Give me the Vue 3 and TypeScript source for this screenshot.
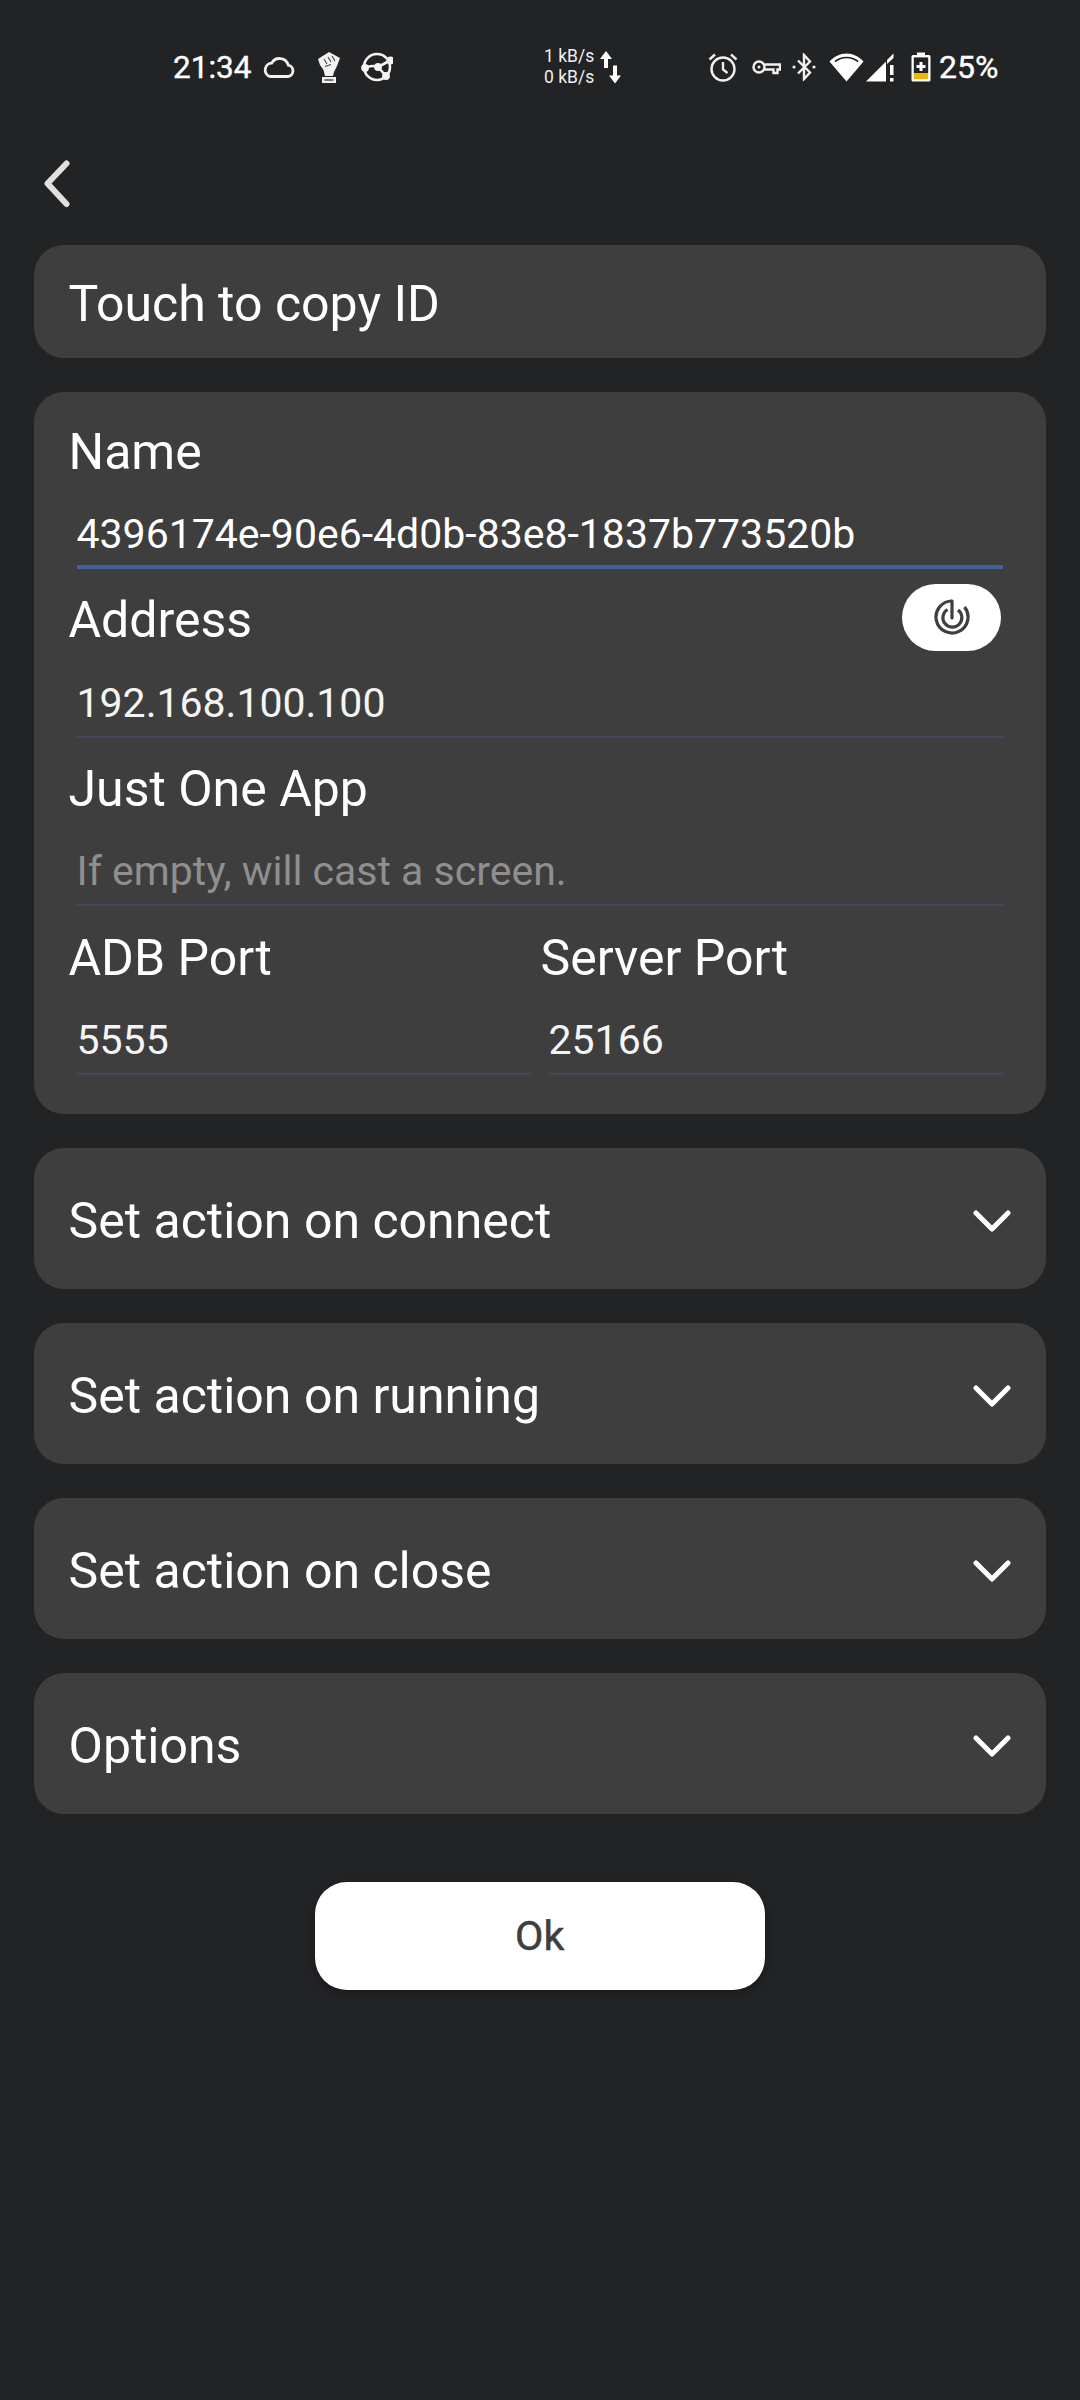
<script setup lang="ts">
const sections: string[] = ['Set action on connect', 'Set action on running', 'Set action on close', 'Options']
</script>

<template>
  <div class="page">
    <div class="status">
      <span class="time">21:34</span>
      <svg class="i-cloud" width="33" height="22" viewBox="0 0 33 22" fill="none" stroke="#f0f0f0" stroke-width="2.800"><path d="M8 20.500H25.500a5.700 5.700 0 0 0 .8-11.300A9 9 0 0 0 9.700 7.200 6.800 6.800 0 0 0 8 20.500Z"/></svg>
      <svg class="i-fist" width="24" height="32" viewBox="0 0 24 32"><path d="M1 8 12 1l11 6-3 8-3 6-1 4H8L6.500 19 3 14Z" fill="#f2f2f2"/><path d="M7 8l3 5M11 6l3 5M15 5l3 5M8 15.500l6-2" stroke="#4a4a4a" stroke-width="1.200" fill="none"/><rect x="5" y="26" width="14" height="6" fill="#f2f2f2"/><rect x="7.500" y="28" width="9" height="2" fill="#777"/></svg>
      <svg class="i-net" width="32" height="30" viewBox="0 0 32 30" fill="none" stroke="#f4f4f4" stroke-width="2.600"><circle cx="16" cy="15" r="13"/><path d="M4 16C8 14 13 13.500 17 15L30 8M17 15 25 24"/><circle cx="4" cy="16" r="2.600" fill="#f4f4f4"/><circle cx="17" cy="15" r="2.600" fill="#f4f4f4"/><circle cx="29.500" cy="8.500" r="2.600" fill="#f4f4f4"/><circle cx="25" cy="24" r="2.600" fill="#f4f4f4"/></svg>
      <div class="speed"><span>1 kB/s</span><span>0 kB/s</span></div>
      <svg class="i-arrows" width="24" height="33" viewBox="0 0 24 33" fill="#fff"><path d="M6 0 12 8H8V17H4V8H0ZM13 14.500H17V24.500H21L15 32.500 9 24.500H13Z"/></svg>
      <svg class="i-alarm" width="30" height="30" viewBox="0 0 30 30" fill="none" stroke="#f0f0f0" stroke-width="2.400"><circle cx="15" cy="17" r="11.500"/><path d="M15 10v7.500l4.500 3.500M1.500 7.500 7 2.500M28.500 7.500 23 2.500"/></svg>
      <svg class="i-key" width="29" height="17" viewBox="0 0 29 17" fill="none" stroke="#f0f0f0" stroke-width="2.400"><circle cx="7" cy="8" r="5.500"/><circle cx="7" cy="8" r="1.500" fill="#f0f0f0" stroke="none"/><path d="M12.500 5.500H28V10.500H25.500V14H21.500V10.500H12.500"/></svg>
      <svg class="i-bt" width="24" height="28" viewBox="0 0 24 28" fill="none" stroke="#f0f0f0" stroke-width="2.400"><path d="M6 7.500 18 19.500 12 26V2L18 8.500 6 20.500"/><circle cx="2" cy="14" r="1.600" fill="#f0f0f0" stroke="none"/><circle cx="22" cy="14" r="1.600" fill="#f0f0f0" stroke="none"/></svg>
      <svg class="i-wifi" width="35" height="29" viewBox="0 0 35 29"><path d="M17.500 28.500 0.500 8.500C5 3.500 11 0.500 17.500 0.500S30 3.500 34.500 8.500Z" fill="#fff"/><path d="M6 8.500C9.500 5.800 13.500 4.500 17.500 4.500S25.500 5.800 29 8.500" fill="none" stroke="#222325" stroke-width="1.600"/></svg>
      <svg class="i-signal" width="28" height="29" viewBox="0 0 28 29" fill="#fff"><path d="M0 28.500 20 8.500V28.500Z"/><path d="M21 7 27.500 0.500V5L21 11Z"/><rect x="24" y="12" width="3.500" height="10"/><rect x="24" y="25" width="3.500" height="3.500"/></svg>
      <svg class="i-bat" width="20" height="30" viewBox="0 0 20 30"><path d="M6 0.500H14V3H18A1.500 1.500 0 0 1 19.500 4.500V28A1.500 1.500 0 0 1 18 29.500H2A1.500 1.500 0 0 1 0.500 28V4.500A1.500 1.500 0 0 1 2 3H6Z" fill="#fff"/><rect x="2.800" y="5.400" width="14.400" height="16" fill="#222325"/><rect x="2.800" y="21.400" width="14.400" height="5.600" fill="#f5b400"/><path d="M8.500 10H11.500V13H14.500V16H11.500V19H8.500V16H5.500V13H8.500Z" fill="#fff"/></svg>
      <span class="pct">25%</span>
    </div>

    <div class="back">
      <svg width="26" height="48" viewBox="0 0 26 48" fill="none" stroke="#e0e0e0" stroke-width="6" stroke-linecap="round" stroke-linejoin="round"><path d="M22.500 3.500 3.500 23.500 22.500 44"/></svg>
    </div>

    <div class="card copy">Touch to copy ID</div>

    <div class="card form">
      <div class="field">
        <div class="label">Name</div>
        <div class="input focused">4396174e-90e6-4d0b-83e8-1837b773520b</div>
      </div>
      <div class="field">
        <div class="label-row">
          <div class="label">Address</div>
          <div class="scan">
            <svg width="36" height="36" viewBox="0 0 36 36" fill="none" stroke="#3e3e3e" stroke-width="3.200"><path d="M18 2A16 16 0 1 0 30.500 8"/><path d="M13.500 10.500A9.500 9.500 0 1 0 24 11"/><path d="M18 2V19" stroke-linecap="round"/></svg>
          </div>
        </div>
        <div class="input">192.168.100.100</div>
      </div>
      <div class="field">
        <div class="label">Just One App</div>
        <div class="input placeholder">If empty, will cast a screen.</div>
      </div>
      <div class="ports">
        <div class="field">
          <div class="label">ADB Port</div>
          <div class="input narrow">5555</div>
        </div>
        <div class="field">
          <div class="label">Server Port</div>
          <div class="input">25166</div>
        </div>
      </div>
    </div>

    <div v-for="s in sections" :key="s" class="card section">
      <span>{{ s }}</span>
      <svg width="38" height="24" viewBox="0 0 38 24" fill="none" stroke="#fff" stroke-width="5" stroke-linecap="round" stroke-linejoin="round"><path d="M3 4 19 20 35 4"/></svg>
    </div>

    <div class="actions">
      <div class="ok">Ok</div>
    </div>
  </div>
</template>

<style>
html, body { margin: 0; background: #222325; }
</style>

<style scoped>
.page {
  width: 1080px;
  height: 2400px;
  background: #222325;
  color: #fff;
  font-family: Roboto, "Liberation Sans", sans-serif;
  overflow: hidden;
  box-sizing: border-box;
  padding: 0 34px 0 33.500px;
}
.status {
  height: 134px;
  margin: 0 -34px 0 -33.500px;
  display: flex;
  align-items: center;
  box-sizing: border-box;
  padding-left: 173px;
}
.status svg { flex: none; }
.time { font-size: 31.500px; width: 89px; color: #fff; -webkit-text-stroke: 0.4px #fff; }
.i-fist { margin-left: 22px; }
.i-net { margin-left: 20px; }
.speed {
  margin-left: 151px;
  width: 56px;
  display: flex;
  flex-direction: column;
  font-size: 17.500px;
  line-height: 21px;
  color: #f0f0f0;
}
.i-alarm { margin-left: 84px; }
.i-key { margin-left: 14px; }
.i-bt { margin-left: 11px; }
.i-wifi { margin-left: 13px; }
.i-signal { margin-left: 2px; }
.i-bat { margin-left: 17px; }
.pct { margin-left: 8px; font-size: 32px; -webkit-text-stroke: 0.4px #fff; }
.back {
  height: 111px;
  display: flex;
  align-items: flex-start;
  padding-left: 10px;
  padding-top: 26px;
  box-sizing: border-box;
}
.card {
  background: #3e3e3e;
  border-radius: 30px;
}
.copy {
  height: 113px;
  line-height: 118px;
  padding-left: 35px;
  font-size: 50px;
  margin-bottom: 34px;
}
.form {
  height: 722px;
  padding: 9px 43px 0 35px;
  box-sizing: border-box;
  margin-bottom: 34px;
}
.field { height: 168.700px; box-sizing: border-box; }
.label {
  height: 76px;
  box-sizing: border-box;
  padding-top: 24.500px;
  line-height: 52px;
  font-size: 50px;
}
.label-row {
  display: flex;
  justify-content: space-between;
  align-items: flex-start;
  height: 76px;
}
.scan {
  width: 99px;
  height: 67px;
  margin: 14px 2px 0 0;
  border-radius: 34px;
  background: #fff;
  display: flex;
  align-items: center;
  justify-content: center;
}
.input {
  margin-left: 8px;
  height: 92px;
  box-sizing: border-box;
  padding-top: 23px;
  line-height: 68px;
  font-size: 41px;
  color: #f4f4f4;
  border-bottom: 2px solid #44465a;
}
.input.narrow { margin-right: 10px; }
.input.focused {
  border-bottom: 4px solid #42629b;
  color: #fff;
}
.input.placeholder { color: #8f8f8f; }
.ports { display: grid; grid-template-columns: 472px 1fr; }
.section {
  height: 140.500px;
  margin-bottom: 34.500px;
  padding: 0 35px 0 35px;
  display: flex;
  align-items: center;
  justify-content: space-between;
  font-size: 50px;
}
.section span { position: relative; top: 3px; }
.section svg { position: relative; top: 3px; }
.actions {
  display: flex;
  justify-content: center;
  padding-top: 34px;
}
.ok {
  width: 450px;
  height: 108px;
  border-radius: 32px;
  background: #fff;
  color: #3e3e3e;
  font-size: 41.250px;
  -webkit-text-stroke: 0.5px #3e3e3e;
  display: flex;
  align-items: center;
  justify-content: center;
  box-shadow: 0 3px 8px rgba(0, 0, 0, 0.3);
}
</style>
